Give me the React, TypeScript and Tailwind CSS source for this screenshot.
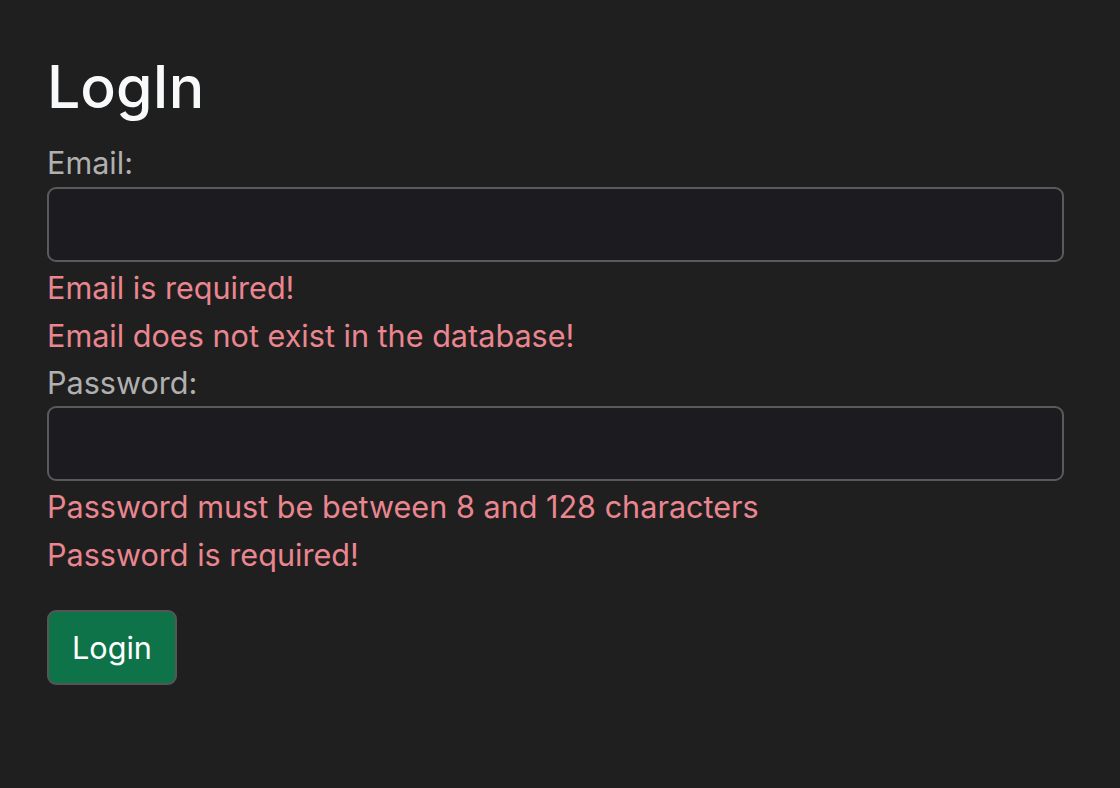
import { useState } from "react";

const LoginPage = () => {
    const [email, setEmail] = useState("");
    const [password, setPassword] = useState("");

    return (
        <div className="min-h-[788px] bg-[#1f1f1f] pl-[47px] pr-[56px] pt-[51px] font-['Inter','Noto_Sans',sans-serif]">
            <h1 className="text-[59px] leading-[71px] font-medium text-[#f8f9fa] mb-[18px]">LogIn</h1>
            <form className="flex flex-col" onSubmit={(e) => e.preventDefault()}>
                <label htmlFor="email" className="text-[30.6px] leading-[45px] text-[#b0b0b0]">Email:</label>
                <input
                    id="email"
                    className="mt-[2px] h-[75px] rounded-[9px] border-2 border-[#5a5a5a] bg-[#1c1b1f] px-4 text-[30px] text-[#dee2e6] outline-none"
                    type="email"
                    value={email}
                    onChange={(e) => setEmail(e.target.value)}
                />
                <div className="text-[30.6px] leading-[45px] text-[#ea868f] mt-[3px]">Email is required!</div>
                <div className="text-[30.6px] leading-[45px] text-[#ea868f] mt-[3px]">Email does not exist in the database!</div>
                <label htmlFor="password" className="text-[30.6px] leading-[45px] text-[#b0b0b0] mt-[2px]">Password:</label>
                <input
                    id="password"
                    className="mt-[1px] h-[75px] rounded-[9px] border-2 border-[#5a5a5a] bg-[#1c1b1f] px-4 text-[30px] text-[#dee2e6] outline-none"
                    type="password"
                    value={password}
                    onChange={(e) => setPassword(e.target.value)}
                />
                <div className="text-[30.6px] leading-[45px] text-[#ea868f] mt-[3px]">Password must be between 8 and 128 characters</div>
                <div className="text-[30.6px] leading-[45px] text-[#ea868f] mt-[3px]">Password is required!</div>
                <div className="mt-[33px]">
                    <button
                        type="submit"
                        className="h-[75px] w-[130px] rounded-[9px] border-2 border-[#555555] bg-[#0e7349] text-[30.6px] text-white"
                    >
                        Login
                    </button>
                </div>
            </form>
        </div>
    )
}

export default LoginPage;
